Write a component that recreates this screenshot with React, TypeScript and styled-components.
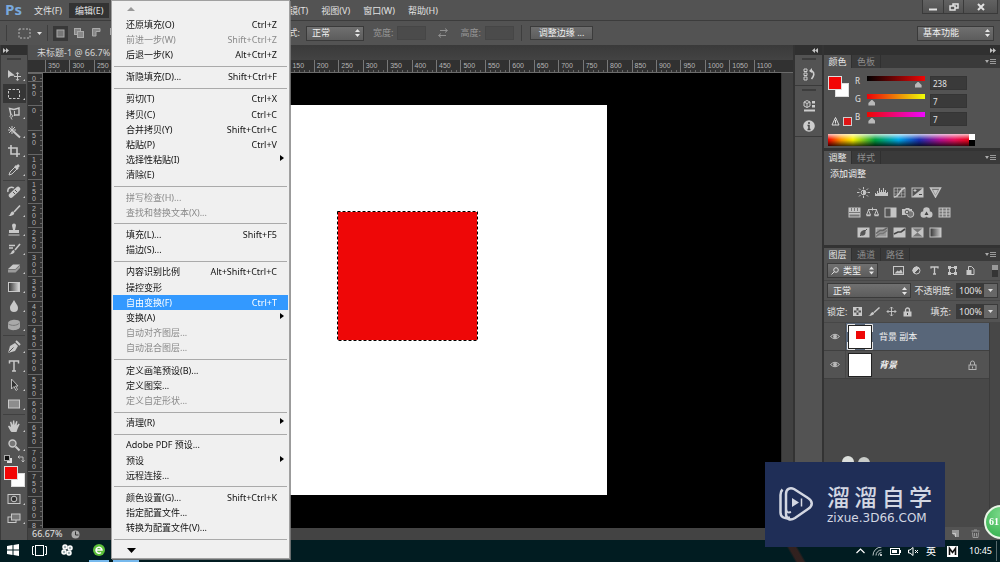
import React from 'react';
import styled, { createGlobalStyle, css } from 'styled-components';

const GlobalStyle = createGlobalStyle`
  *, *::before, *::after { box-sizing: border-box; }
  body {
    margin: 0;
    background: #000;
    color: #e2e2e2;
    font: 9px/12px "Noto Sans", "Noto Sans CJK SC", sans-serif;
    overflow: hidden;
  }
  button, input, select { font: inherit; color: inherit; margin: 0; padding: 0; border: 0; background: none; border-radius: 0; }
  ul { margin: 0; padding: 0; list-style: none; }
  svg { display: block; flex: none; }
`;

/* ---------- frame ---------- */

const Page = styled.div`
  display: flex;
  flex-direction: column;
  height: 100vh;
`;

const MenuBar = styled.header`
  display: flex;
  height: 20px;
  background: #535353;
`;

const Brand = styled.strong`
  width: 28px;
  padding-left: 5px;
  font: bold 15px/19px "Open Sans", sans-serif;
  color: #79a9dd;
`;

const MenuNav = styled.nav`
  display: flex;
  flex: 1;
  gap: 1px;
  padding: 3px 0 2px;
`;

const MenuTitle = styled.button<{ $open?: boolean }>`
  height: 15px;
  padding: 0 6px;
  white-space: nowrap;
  background: ${(p) => (p.$open ? '#333' : 'transparent')};
`;

const WindowButtons = styled.div`
  display: flex;
  height: 14px;
  margin-right: 2px;
  border: 1px solid #3a3a3a;
  border-top: 0;
`;

const WindowButton = styled.button<{ $wide?: boolean }>`
  display: grid;
  place-items: center;
  width: ${(p) => (p.$wide ? 34 : 20)}px;
  background: linear-gradient(#626262, #515151);
  & + & { border-left: 1px solid #3a3a3a; }
`;

const OptionsBar = styled.div`
  display: flex;
  align-items: center;
  height: 25px;
  padding: 0 6px;
  gap: 6px;
  background: #535353;
  border-top: 1px solid #3c3c3c;
`;

const ToolOptions = styled.div`
  display: flex;
  align-items: center;
  flex: 0 0 294px;
  justify-content: space-between;
  white-space: nowrap;
`;

const Cluster = styled.div<{ $gap?: number }>`
  display: flex;
  align-items: center;
  gap: ${(p) => p.$gap ?? 4}px;
`;

const ModeButton = styled.button<{ $on?: boolean }>`
  display: grid;
  place-items: center;
  width: 15px;
  height: 15px;
  background: ${(p) => (p.$on ? '#383838' : 'transparent')};
`;

const Field = styled.label<{ $dim?: boolean; $gap?: number }>`
  display: flex;
  align-items: center;
  gap: ${(p) => p.$gap ?? 3}px;
  color: ${(p) => (p.$dim ? '#969696' : '#e2e2e2')};
  white-space: nowrap;
`;

const NumberBox = styled.input<{ $w: number; $dim?: boolean }>`
  width: ${(p) => p.$w}px;
  height: 14px;
  padding-left: 2px;
  font-size: 8px;
  background: ${(p) => (p.$dim ? '#4b4b4b' : '#3a3a3a')};
  border: 1px solid ${(p) => (p.$dim ? '#464646' : '#353535')};
`;

const SelectShell = styled.span<{ $w?: number }>`
  display: grid;
  align-items: center;
  width: ${(p) => (p.$w ? p.$w + 'px' : 'auto')};
  flex: ${(p) => (p.$w ? 'none' : 1)};
  background: linear-gradient(#707070, #5c5c5c);
  border: 1px solid #3a3a3a;
  color: #f0f0f0;
  & > * { grid-area: 1 / 1; }
  & > svg { justify-self: end; margin-right: 3px; pointer-events: none; }
`;

const SelectBox = styled.select<{ $indent?: number }>`
  appearance: none;
  width: 100%;
  height: 13px;
  padding-left: ${(p) => p.$indent ?? 5}px;
  outline: 0;
`;

const Rule = styled.span`
  width: 1px;
  height: 16px;
  background: #3e3e3e;
`;

const PushButton = styled.button`
  height: 14px;
  padding: 0 8px;
  background: linear-gradient(#6e6e6e, #5d5d5d);
  border: 1px solid #3c3c3c;
  color: #f0f0f0;
  white-space: nowrap;
`;

const Spacer = styled.span`
  flex: 1;
`;

const Workspace = styled.main`
  display: flex;
  flex: 1;
  min-height: 0;
`;

/* ---------- tool box ---------- */

const ToolColumn = styled.aside`
  display: flex;
  flex-direction: column;
  align-items: center;
  width: 28px;
  background: #535353;
  border-right: 1px solid #3a3a3a;
  border-left: 1px solid #3a3a3a;
  overflow: hidden;
`;

const DockHead = styled.div<{ $end?: boolean }>`
  display: flex;
  align-items: center;
  align-self: stretch;
  flex: none;
  justify-content: ${(p) => (p.$end ? 'flex-end' : 'flex-start')};
  height: 10px;
  padding: 0 4px 0 2px;
  background: #303030;
`;

const Grip = styled.div`
  width: 14px;
  height: 2px;
  flex: none;
  margin: 3px 0 5px;
  background: #3d3d3d;
`;

const ToolButton = styled.button<{ $on?: boolean }>`
  position: relative;
  display: grid;
  place-items: center;
  flex: none;
  width: 23px;
  height: 19px;
  background: ${(p) => (p.$on ? '#363636' : 'transparent')};
  color: #c9c9c9;
  &::after {
    content: '';
    position: absolute;
    right: 1px;
    bottom: 3px;
    border: 1px solid;
    border-color: transparent #c9c9c9 #c9c9c9 transparent;
  }
`;

const ToolSplit = styled.hr`
  align-self: stretch;
  height: 1px;
  flex: none;
  margin: 1px 2px;
  border: 0;
  background: #404040;
`;

const MiniRow = styled.div`
  display: flex;
  justify-content: space-between;
  width: 21px;
  margin: 1px 0 3px;
`;

const Swatches = styled.div<{ $s: number }>`
  display: grid;
  flex: none;
  width: ${(p) => p.$s + 7}px;
  height: ${(p) => p.$s + 7}px;
  margin-bottom: 2px;
`;

const Swatch = styled.button<{ $s: number; $c: string; $back?: boolean }>`
  grid-area: 1 / 1;
  width: ${(p) => p.$s}px;
  height: ${(p) => p.$s}px;
  align-self: ${(p) => (p.$back ? 'end' : 'start')};
  justify-self: ${(p) => (p.$back ? 'end' : 'start')};
  background: ${(p) => p.$c};
  border: 1px solid #ddd;
`;

/* ---------- document ---------- */

const DocumentArea = styled.section`
  display: flex;
  flex-direction: column;
  flex: 1;
  min-width: 0;
  background: #3d3d3d;
`;

const TabStrip = styled.div`
  display: flex;
  height: 15px;
  flex: none;
  background: linear-gradient(#3a3a3a, #434343);
`;

const DocTab = styled.button`
  height: 15px;
  padding: 0 9px;
  background: #505050;
  color: #d6d6d6;
  font-size: 9px;
  white-space: nowrap;
`;

const CanvasRow = styled.div`
  display: flex;
  flex: 1;
  min-height: 0;
`;

const RulerTop = styled.div`
  display: flex;
  height: 13px;
  flex: none;
  padding: 0 15px 0 17px;
  background: #313131;
  border-bottom: 1px solid #6a6a6a;
  font: 7px/11px "Liberation Sans", sans-serif;
  color: #b5b5b5;
`;

const TopMark = styled.span`
  flex: 1 1 0;
  min-width: 0;
  padding-left: 2px;
  border-left: 1px solid #777;
  background: repeating-linear-gradient(90deg, transparent 0 4px, #666 4px 5px) bottom / 100% 2px no-repeat;
`;

const RulerSide = styled.div`
  display: flex;
  flex-direction: column;
  width: 15px;
  flex: none;
  background: #313131;
  border-right: 1px solid #6a6a6a;
  font: 7px/7px "Liberation Sans", sans-serif;
  color: #b5b5b5;
  overflow: hidden;
`;

const SideMark = styled.span<{ $part?: number }>`
  display: flex;
  flex-direction: column;
  flex: ${(p) => (p.$part ? `0 0 ${p.$part}px` : '1 1 0')};
  min-height: 0;
  padding: 1px 0 0 4px;
  border-top: 1px solid #666;
  background: repeating-linear-gradient(transparent 0 4px, #666 4px 5px) right / 2px 100% no-repeat;
  overflow: hidden;
`;

const Pasteboard = styled.div`
  display: grid;
  place-items: center;
  flex: 1;
  padding-bottom: 2px;
  background: #000;
`;

const Artboard = styled.div`
  position: relative;
  width: 390px;
  height: 390px;
  background: #fff;
`;

const SelectedShape = styled.svg`
  position: absolute;
  left: 120px;
  top: 106px;
`;

const ScrollTrack = styled.div`
  width: 12px;
  background: #414141;
  border-left: 1px solid #333;
`;

const StatusBar = styled.footer`
  display: flex;
  align-items: center;
  gap: 9px;
  height: 12px;
  flex: none;
  padding-left: 4px;
  background: #434343;
`;

/* ---------- docks ---------- */

const IconDock = styled.aside`
  width: 29px;
  flex: none;
  background: #535353;
  border-left: 2px solid #333;
`;

const DockGroup = styled.div`
  display: flex;
  flex-direction: column;
  align-items: center;
  border-bottom: 1px solid #3a3a3a;
`;

const DockButton = styled.button`
  display: grid;
  place-items: center;
  width: 24px;
  height: 19px;
  margin-bottom: 1px;
  color: #cdcdcd;
`;

const Panels = styled.aside`
  display: flex;
  flex-direction: column;
  width: 178px;
  flex: none;
  background: #333;
  border-left: 2px solid #333;
`;

const Panel = styled.section<{ $grow?: boolean }>`
  display: flex;
  flex-direction: column;
  flex: ${(p) => (p.$grow ? 1 : 'none')};
  margin-bottom: ${(p) => (p.$grow ? 0 : 3)}px;
  min-height: 0;
  background: #535353;
`;

const PanelTabs = styled.div`
  display: flex;
  align-items: center;
  height: 13px;
  flex: none;
  padding-right: 4px;
  background: #3a3a3a;
`;

const PanelTab = styled.button<{ $on?: boolean }>`
  width: ${(p) => (p.$on ? 28 : 29)}px;
  height: 13px;
  background: ${(p) => (p.$on ? '#535353' : 'transparent')};
  color: ${(p) => (p.$on ? '#e6e6e6' : '#8d8d8d')};
  border-right: 1px solid #303030;
`;

const ColorBody = styled.div`
  display: flex;
  height: 66px;
  padding: 8px 33px 0 4px;
`;

const ColorLeft = styled.div`
  display: flex;
  flex-direction: column;
  justify-content: space-between;
  width: 27px;
  height: 50px;
`;

const Gamut = styled.div`
  display: flex;
  align-items: center;
  gap: 3px;
  padding-left: 3px;
`;

const GamutChip = styled.button`
  width: 9px;
  height: 9px;
  background: #e01515;
  border: 1px solid #ccc;
`;

const Channels = styled.div`
  display: flex;
  flex-direction: column;
  gap: 4px;
  flex: 1;
`;

const Channel = styled.div`
  display: flex;
  gap: 5px;
  height: 14px;
`;

const ChannelName = styled.label`
  width: 7px;
  font-size: 8px;
  line-height: 10px;
`;

const Slider = styled.input<{ $from: string; $to: string }>`
  appearance: none;
  flex: 1;
  min-width: 0;
  width: 0;
  height: 12px;
  margin: 0 0 2px;
  background: linear-gradient(90deg, ${(p) => p.$from}, ${(p) => p.$to}) top / 100% 5px no-repeat;
  &::-webkit-slider-thumb {
    appearance: none;
    width: 7px;
    height: 6px;
    margin-top: 5px;
    background: #b9b9b9;
    clip-path: polygon(50% 0, 100% 60%, 100% 100%, 0 100%, 0 60%);
  }
`;

const Spectrum = styled.div`
  height: 12px;
  margin: 0 25px 2px 4px;
  background:
    linear-gradient(#fff 0 50%, #000 50%) right / 6px 100% no-repeat,
    linear-gradient(rgba(255,255,255,.75), rgba(255,255,255,0) 45%, rgba(0,0,0,0) 50%, rgba(0,0,0,.75)),
    linear-gradient(90deg, #f00000, #ff9a00 9%, #f7f000 17%, #00a040 32%, #00a8e8 48%, #1b2fb0 62%, #b01090 76%, #e8105a 86%, #f00000);
`;

const AdjustBody = styled.div`
  display: flex;
  flex-direction: column;
  height: 81px;
  padding: 4px 6px;
`;

const AdjustTitle = styled.div`
  line-height: 12px;
  color: #eee;
`;

const AdjustGrid = styled.div`
  display: flex;
  flex-direction: column;
  gap: 8px;
  width: 139px;
  padding-top: 6px;
`;

const AdjustRow = styled.div`
  display: flex;
  justify-content: center;
  gap: 4px;
`;

const AdjustButton = styled.button`
  display: grid;
  place-items: center;
  width: 14px;
  height: 12px;
  color: #c4c4c4;
`;

const LayerBar = styled.div<{ $tall?: boolean }>`
  display: flex;
  align-items: center;
  height: ${(p) => (p.$tall ? 22 : 20)}px;
  flex: none;
  padding: 0 2px 0 3px;
  gap: 4px;
  border-bottom: 1px solid #474747;
  white-space: nowrap;
`;

const IconButton = styled.button<{ $w?: number }>`
  display: grid;
  place-items: center;
  width: ${(p) => p.$w ?? 12}px;
  height: 14px;
  color: #c8c8c8;
`;

const PercentBox = styled.span`
  display: flex;
  align-items: center;
  height: 15px;
  border: 1px solid #3a3a3a;
  background: #3a3a3a;
  input { width: 27px; height: 13px; padding-left: 2px; }
  button { display: grid; place-items: center; width: 13px; height: 13px; background: #676767; }
`;

const LayerArea = styled.div`
  display: flex;
  flex: 1;
  min-height: 0;
`;

const LayerList = styled.ul`
  flex: 1;
  background: #484848;
`;

const Layer = styled.li<{ $on?: boolean }>`
  display: flex;
  align-items: center;
  height: 28px;
  padding-right: 12px;
  background: ${(p) => (p.$on ? '#586679' : '#535353')};
  border-bottom: 1px solid #404040;
  color: #f0f0f0;
  & > svg { color: #b4b4b4; }
`;

const EyeButton = styled.button`
  display: grid;
  place-items: center;
  align-self: stretch;
  width: 22px;
  margin-right: 2px;
  background: #535353;
  border-right: 1px solid #484848;
  color: #bdbdbd;
`;

const Thumb = styled.span`
  display: grid;
  place-items: center;
  width: 24px;
  height: 24px;
  margin-right: 7px;
  background: #fff;
  border: 1px solid #222;
`;

const ThumbCorners = styled.svg`
  grid-area: 1 / 1;
  margin: -2px;
`;

const ThumbShape = styled.i`
  grid-area: 1 / 1;
  width: 9px;
  height: 8px;
  margin-bottom: 3px;
  background: #ee0707;
`;

const LayerName = styled.span<{ $italic?: boolean }>`
  flex: 1;
  ${(p) => p.$italic && css`font-style: italic; font-weight: 600;`}
`;

const LayerScroll = styled.div`
  width: 11px;
  background: #474747;
  border-left: 1px solid #3c3c3c;
`;

const LayerFooter = styled.div`
  display: flex;
  align-items: center;
  justify-content: flex-end;
  gap: 8px;
  height: 13px;
  flex: none;
  padding-right: 19px;
  background: #535353;
`;

/* ---------- drop-down menu ---------- */

const DropMenu = styled.div`
  position: fixed;
  left: 111px;
  top: 0;
  display: flex;
  flex-direction: column;
  width: 179px;
  height: calc(100vh - 3px);
  background: #f0f0f0;
  border: 1px solid #a0a0a0;
  box-shadow: 1px 1px 0 rgba(130, 130, 130, 0.8);
  color: #111;
  z-index: 5;
`;

const ScrollCue = styled.button<{ $h: number }>`
  display: flex;
  align-items: center;
  height: ${(p) => p.$h}px;
  flex: none;
  padding-left: 15px;
`;

const MenuItem = styled.button<{ $on?: boolean }>`
  display: flex;
  align-items: center;
  justify-content: space-between;
  flex: 1 1 0;
  min-height: 0;
  margin: 0 1px;
  padding: 0 11px 0 13px;
  line-height: 12px;
  white-space: nowrap;
  background: ${(p) => (p.$on ? '#3399ff' : 'transparent')};
  color: ${(p) => (p.$on ? '#fff' : '#111')};
  &:disabled { color: #8a8a8a; }
  svg { margin: -4px -7px 0 0; }
`;

const MenuSplit = styled.hr`
  width: calc(100% - 4px);
  height: 1px;
  flex: none;
  margin: 3px 2px;
  border: 0;
  background: #aaa;
`;

/* ---------- taskbar and overlays ---------- */

const Taskbar = styled.footer`
  display: flex;
  align-items: stretch;
  height: 22px;
  flex: none;
  background: linear-gradient(60deg, transparent 0 40%, rgba(70, 35, 30, .7) 44% 54%, transparent 58%) 770px 0 / 50px 100% no-repeat, #011c21;
  color: #fff;
`;

const TaskButton = styled.button<{ $w: number; $run?: boolean }>`
  display: grid;
  place-items: center;
  width: ${(p) => p.$w}px;
  border-bottom: 2px solid ${(p) => (p.$run ? '#76b9ed' : 'transparent')};
`;

const TaskGap = styled.span<{ $w: number }>`
  width: ${(p) => p.$w}px;
`;

const Tray = styled.div`
  display: flex;
  align-items: center;
  gap: 7px;
  margin-left: auto;
  padding-right: 3px;
`;

const InputMode = styled.span`
  padding-right: 4px;
  font-size: 10px;
`;

const Clock = styled.time`
  padding: 0 4px;
  line-height: 20px;
  border-right: 1px solid #56696c;
`;

const Blobs = styled.svg`
  position: fixed;
  right: 128px;
  bottom: 93px;
`;

const Watermark = styled.div`
  position: fixed;
  right: 55px;
  bottom: 15px;
  display: flex;
  align-items: center;
  gap: 13px;
  width: 180px;
  height: 85px;
  padding: 0 13px 2px 14px;
  background: #1f2e57;
  color: #d3d7e2;
`;

const WatermarkText = styled.div`
  flex: 1;
`;

const WatermarkName = styled.div`
  display: flex;
  justify-content: space-between;
  font-size: 23px;
  line-height: 28px;
  font-weight: 500;
`;

const WatermarkSite = styled.div`
  font: 12px/14px "DejaVu Sans", sans-serif;
  white-space: nowrap;
`;

const FloatBall = styled.button`
  position: fixed;
  right: -18px;
  bottom: 23px;
  width: 34px;
  height: 34px;
  padding-right: 14px;
  border-radius: 50%;
  border: 2px solid #e8f5e6;
  background: radial-gradient(circle at 50% 25%, #7bd98a, #2fae4a);
  color: #fff;
  font: bold 10px/12px "Liberation Serif", serif;
`;

/* ---------- drawings ---------- */

type IconProps = { w?: number; h?: number; children: React.ReactNode };
const Icon = ({ w = 14, h = 14, children }: IconProps) => (
  <svg width={w} height={h} viewBox={`0 0 ${w} ${h}`} fill="none" stroke="currentColor" aria-hidden="true">
    {children}
  </svg>
);

const UpDown = () => (
  <Icon w={5} h={8}><path d="M0 3 2.5 0 5 3ZM0 5 2.5 8 5 5Z" fill="#e6e6e6" stroke="none" /></Icon>
);
const DownTri = () => (
  <Icon w={5} h={3}><path d="M0 0h5L2.5 3Z" fill="#e0e0e0" stroke="none" /></Icon>
);
const Chevrons = ({ right }: { right?: boolean }) => (
  <Icon w={6} h={5}>
    <path d={right ? 'M0 0 3 2.5 0 5ZM3 0 6 2.5 3 5Z' : 'M3 0 0 2.5 3 5ZM6 0 3 2.5 6 5Z'} fill="#c4c4c4" stroke="none" />
  </Icon>
);
const PanelMenu = () => (
  <Icon w={11} h={6}><path d="M0 1h4L2 4Z" fill="#aaa" stroke="none" /><path d="M5 .5h6M5 2.5h6M5 4.5h6" stroke="#999" /></Icon>
);
const SubArrow = () => (
  <Icon w={4} h={6}><path d="M0 0 4 3 0 6Z" fill="#000" stroke="none" /></Icon>
);
const LockIcon = () => (
  <Icon w={9} h={10}><path d="M2.5 5V3a2 2 0 0 1 4 0v2" /><rect x="1" y="5" width="7" height="4.5" /><path d="M4.5 6.5v2" /></Icon>
);
const SolidLock = () => (
  <Icon w={9} h={10}><path d="M2.5 5V3a2 2 0 0 1 4 0v2" strokeWidth="1.3" /><path d="M.5 4.500h8v5h-8Z" fill="currentColor" stroke="none" /><path d="M4.500 6v2" stroke="#444" /></Icon>
);
const EyeIcon = () => (
  <Icon w={10} h={7}><path d="M.5 3.500Q5-1 9.500 3.500 5 8 .5 3.500Z" /><circle cx="5" cy="3.500" r="1.500" fill="currentColor" /></Icon>
);

const toolGroups: { name: string; art: React.ReactNode }[][] = [
  [
    { name: '移动', art: <><path d="M1 2v8l2.500-2 4.500-.5Z" fill="currentColor" stroke="none" /><path d="M10.500 5v7M7 8.500h7" /><path d="m9 6 1.500-1.800L12 6M9 11l1.500 1.800L12 11" strokeWidth=".8" /></> },
    { name: '矩形选框', art: <rect x="1.500" y="2.500" width="11" height="9" strokeDasharray="2.500 1.500" /> },
    { name: '套索', art: <><path d="M4 9 2.500 2.500 7 3.500 12 2v7H7.500" strokeWidth="1.400" /><path d="M7.500 5v5M4 9c-2 1-1 3 1 2s0-3-1-2Zm0 3 1 1.500" /></> },
    { name: '魔棒', art: <><path d="m6 6 7 6.500" strokeWidth="2" /><path d="M5 1v8M1 5h8M2 2l6 6M8 2 2 8" /></> },
    { name: '裁剪', art: <path d="M4 1v9h9M1 4h9v9" strokeWidth="1.600" /> },
    { name: '吸管', art: <><path d="m2 12 1-3 5-5 2 2-5 5Z" /><path d="m8 3 3 3M9 5l3-3" strokeWidth="2.500" /></> },
  ],
  [
    { name: '修复画笔', art: <><path d="m4 10.500 7-6.500" strokeWidth="4.500" strokeLinecap="round" /><path d="m6 7 2 2M8 5l2 2" stroke="#535353" /><path d="M1 7c-1-4 3-6 6-4" strokeWidth="1.500" /></> },
    { name: '画笔', art: <><path d="M13 1.500 7 8" strokeWidth="1.600" /><path d="M1 12c3 0 2-5 5-4.500 3 2 0 5-5 4.500Z" fill="currentColor" stroke="none" /></> },
    { name: '仿制图章', art: <><path d="M5 2.500a2 2 0 0 1 4 0L8 7h4v3H2V7h4Z" fill="currentColor" stroke="none" /><path d="M1.500 12h11" /></> },
    { name: '历史记录画笔', art: <><path d="M13 2 8 8" strokeWidth="1.600" /><path d="M2 12c3 0 2-4 5-4 2 2-1 5-5 4Z" fill="currentColor" stroke="none" /><path d="M2 3.500h6M2 6h4" strokeWidth="1.500" /></> },
    { name: '橡皮擦', art: <><path d="m1 8 5-4.500h7L8.500 8Z" fill="currentColor" stroke="none" /><path d="M1 8.500h7.500v3H1ZM8.500 8.500 13 4v3l-4.500 4.500Z" fill="#9a9a9a" stroke="none" /></> },
    { name: '渐变', art: <><defs><linearGradient id="gt"><stop stopColor="#333" /><stop offset="1" stopColor="#ddd" /></linearGradient></defs><rect x="1.500" y="2.500" width="11" height="9" fill="url(#gt)" /></> },
    { name: '模糊', art: <path d="M7 1c2 4 4 5 4 8a4 4 0 0 1-8 0c0-3 2-4 4-8Z" fill="currentColor" stroke="none" /> },
    { name: '海绵', art: <><path d="M1 5c1-4 11-4 12-1v5c-1 4-11 4-12 1Z" fill="#a9a9a9" stroke="none" /><path d="M1.500 6c3 2 8 2 11-1" stroke="#777" /></> },
  ],
  [
    { name: '钢笔', art: <><path d="M1 13 3 6l5-3 3 3-3 5Z" fill="currentColor" stroke="none" /><path d="m9 1 4 4" strokeWidth="2" /><path d="m1.500 12.500 5-5" stroke="#535353" /></> },
    { name: '文字', art: <path d="M2.500 4.500V2h9v2.500M7 2v10M5 12h4" strokeWidth="1.500" /> },
    { name: '路径选择', art: <path d="M4.500 1v10L7 8.500l2 4 1.500-1-2-3.500H11Z" fill="#333" strokeWidth=".9" /> },
    { name: '矩形', art: <rect x="1.500" y="3" width="11" height="8" fill="#8d8d8d" /> },
  ],
  [
    { name: '抓手', art: <path d="M3.500 12 1 7.500l1-1L4 8 3 3l1.300-.4L5.500 6 6 1.500h1.300L7.700 6l1.600-4 1.200.5-.8 4 2-2 1 .8L10.500 10l-1 3h-5Z" fill="currentColor" stroke="none" /> },
    { name: '缩放', art: <><circle cx="5.500" cy="5.500" r="3.500" strokeWidth="1.400" fill="#777" /><path d="m8.500 8.500 4 4" strokeWidth="2" /></> },
  ],
];

const adjustRows: { name: string; art: React.ReactNode }[][] = [
  [
    { name: '亮度/对比度', art: <><circle cx="6.500" cy="5.500" r="2.300" /><path d="M6.500 3.200a2.300 2.300 0 0 1 0 4.600Z" fill="currentColor" /><path d="M6.500 0v2M6.500 9v2M0 5.500h2.500M10.500 5.500H13M2 1.500 3.500 3M11 1.500 9.500 3M2 9.500 3.500 8M11 9.500 9.500 8" /></> },
    { name: '色阶', art: <path d="M0 9V6h1v1h1V4h1v2h1V1h1v4h1V3h1v2h1V1h1v4h1V3h1v3h1V5h1v4Z" fill="currentColor" stroke="none" /> },
    { name: '曲线', art: <><rect x="1" y="1" width="11" height="9" strokeWidth=".8" /><path d="M1 4h11M1 7h11M4.500 1v9M8.500 1v9" strokeWidth=".5" /><path d="M1 10c6 0 5-8 11-9" strokeWidth="1.500" /></> },
    { name: '曝光度', art: <><rect x="1" y="1" width="11" height="9" /><path d="M12 1v9H1Z" fill="currentColor" stroke="none" /><path d="M2.500 3.500h3M4 2v3" /><path d="M8 7.500h3" stroke="#444" /></> },
    { name: '自然饱和度', art: <><path d="M1.500 1h10l-5 9Z" fill="#777" strokeWidth="1.500" /><path d="M4 3h5L6.500 8Z" fill="currentColor" stroke="none" /></> },
  ],
  [
    { name: '色相/饱和度', art: <><path d="M.5.500h12v10H.5Z" fill="currentColor" stroke="none" /><path d="M3.500 1v3M6.500 1v3M9.500 1v3M1 5.500h11" stroke="#777" /><path d="M1.500 8.500h10" stroke="#777" strokeWidth="2" /></> },
    { name: '色彩平衡', art: <><path d="M2 2.500h9M6.500.500v3M2.500 3 .5 8h4Zm8 0-2 5h4Z" /><path d="M.5 8.500h4M8.500 8.500h4" strokeWidth="1.500" /></> },
    { name: '黑白', art: <><rect x="1" y="1" width="11" height="9" fill="#555" /><path d="M6.500 1H12v9H6.500Z" fill="currentColor" stroke="none" /></> },
    { name: '照片滤镜', art: <><path d="M0 2h3l1-1h3l1 1h2v6H0Z" fill="currentColor" stroke="none" /><circle cx="8.500" cy="7" r="3.300" fill="#777" /><circle cx="5" cy="5" r="1.800" stroke="#555" /></> },
    { name: '通道混合器', art: <><circle cx="6.500" cy="3.500" r="3.300" fill="currentColor" stroke="none" /><circle cx="3.800" cy="7.500" r="3.300" fill="currentColor" stroke="none" /><circle cx="9.200" cy="7.500" r="3.300" fill="currentColor" stroke="none" /><path d="M6.500 4.500 8.500 8h-4Z" fill="#444" stroke="none" /></> },
    { name: '颜色查找', art: <><rect x="1" y="1" width="11" height="9" fill="#777" /><path d="M1 4h11M1 7h11M4.700 1v9M8.300 1v9" /></> },
  ],
  [
    { name: '反相', art: <><rect x="1" y="1" width="11" height="9" fill="currentColor" /><path d="M3.500 8.500c-1-3 1-5.500 5-5.500v3c0 2-2 3-5 2.500Z" fill="#555" stroke="none" /><path d="m3 9 7-7" stroke="#555" /></> },
    { name: '色调分离', art: <><rect x="1" y="1" width="11" height="9" fill="#999" /><path d="m1 6.500 4-3h3L12 1" stroke="#666" strokeWidth="1.500" /><path d="m1 9.500 4-3 3 0 4-3" stroke="#777" strokeWidth="1.500" /></> },
    { name: '阈值', art: <><rect x="1" y="1" width="11" height="9" fill="currentColor" /><path d="m1 7 4-2 3 0 4-3" stroke="#444" strokeWidth="1.600" /></> },
    { name: '可选颜色', art: <><rect x="1" y="1" width="11" height="9" fill="#777" /><path d="M1 1l5.500 4.500L1 10ZM12 1 6.500 5.500 12 10Z" fill="currentColor" stroke="none" /></> },
    { name: '渐变映射', art: <><defs><linearGradient id="gm"><stop stopColor="#333" /><stop offset="1" stopColor="#ccc" /></linearGradient></defs><rect x="1" y="1" width="11" height="9" fill="url(#gm)" /></> },
  ],
];

/* ---------- data ---------- */

const menuTitles = ['文件(F)', '编辑(E)', '图像(I)', '图层(L)', '文字(Y)', '选择(S)', '滤镜(T)', '视图(V)', '窗口(W)', '帮助(H)'];

type Entry = { label: string; keys?: string; off?: boolean; on?: boolean; sub?: boolean };
const editMenu: Entry[][] = [
  [{ label: '还原填充(O)', keys: 'Ctrl+Z' }, { label: '前进一步(W)', keys: 'Shift+Ctrl+Z', off: true }, { label: '后退一步(K)', keys: 'Alt+Ctrl+Z' }],
  [{ label: '渐隐填充(D)...', keys: 'Shift+Ctrl+F' }],
  [
    { label: '剪切(T)', keys: 'Ctrl+X' }, { label: '拷贝(C)', keys: 'Ctrl+C' }, { label: '合并拷贝(Y)', keys: 'Shift+Ctrl+C' },
    { label: '粘贴(P)', keys: 'Ctrl+V' }, { label: '选择性粘贴(I)', sub: true }, { label: '清除(E)' },
  ],
  [{ label: '拼写检查(H)...', off: true }, { label: '查找和替换文本(X)...', off: true }],
  [{ label: '填充(L)...', keys: 'Shift+F5' }, { label: '描边(S)...' }],
  [
    { label: '内容识别比例', keys: 'Alt+Shift+Ctrl+C' }, { label: '操控变形' }, { label: '自由变换(F)', keys: 'Ctrl+T', on: true },
    { label: '变换(A)', sub: true }, { label: '自动对齐图层...', off: true }, { label: '自动混合图层...', off: true },
  ],
  [{ label: '定义画笔预设(B)...' }, { label: '定义图案...' }, { label: '定义自定形状...', off: true }],
  [{ label: '清理(R)', sub: true }],
  [{ label: 'Adobe PDF 预设...' }, { label: '预设', sub: true }, { label: '远程连接...' }],
  [{ label: '颜色设置(G)...', keys: 'Shift+Ctrl+K' }, { label: '指定配置文件...' }, { label: '转换为配置文件(V)...' }],
];

const topMarks = Array.from({ length: 30 }, (_, i) => Math.abs(i * 50 - 350));
const sideMarks = Array.from({ length: 18 }, (_, i) => Math.abs(i * 50 - 50));

const channels = [
  { name: 'R', value: 238, from: '#000', to: '#f00707' },
  { name: 'G', value: 7, from: '#ee0007', to: '#eeff07' },
  { name: 'B', value: 7, from: '#ee0700', to: '#ee07ff' },
];

/* ---------- sections ---------- */

const Percent = ({ label, gap }: { label: string; gap: number }) => (
  <Field $gap={gap}>
    {label}
    <PercentBox>
      <input defaultValue="100%" aria-label={label} />
      <button aria-label="展开"><DownTri /></button>
    </PercentBox>
  </Field>
);

function Toolbox() {
  return (
    <ToolColumn>
      <DockHead><Chevrons right /></DockHead>
      <Grip />
      {toolGroups.map((group, g) => (
        <React.Fragment key={g}>
          {g > 0 && <ToolSplit />}
          {group.map((t) => (
            <ToolButton key={t.name} aria-label={t.name} $on={t.name === '矩形选框'}>
              <Icon>{t.art}</Icon>
            </ToolButton>
          ))}
        </React.Fragment>
      ))}
      <MiniRow>
        <Icon w={8} h={8}><rect x="3" y="3" width="5" height="5" fill="#ddd" stroke="none" /><rect x=".5" y=".5" width="5" height="5" fill="#111" stroke="#aaa" /></Icon>
        <Icon w={8} h={8}><path d="M1 2h5v5M2.500.500 1 2l1.500 1.500M4.500 5.500 6 7l1.500-1.500" stroke="#bbb" /></Icon>
      </MiniRow>
      <Swatches $s={14}>
        <Swatch $s={14} $c="#fff" $back aria-label="背景色" />
        <Swatch $s={14} $c="#f20505" aria-label="前景色" />
      </Swatches>
      <ToolButton aria-label="快速蒙版"><Icon><rect x="1" y="2.500" width="12" height="9" /><circle cx="7" cy="7" r="2.800" fill="#333" /></Icon></ToolButton>
      <ToolButton aria-label="屏幕模式"><Icon><rect x="1" y="6" width="8" height="5.500" /><rect x="4.500" y="3" width="8.500" height="6" fill="#777" /></Icon></ToolButton>
    </ToolColumn>
  );
}

function EditMenu() {
  return (
    <DropMenu role="menu">
      <ScrollCue $h={16} aria-label="向上滚动"><Icon w={8} h={4}><path d="M0 4 4 0 8 4Z" fill="#999" stroke="none" /></Icon></ScrollCue>
      {editMenu.map((group, g) => (
        <React.Fragment key={g}>
          {group.map((e) => (
            <MenuItem key={e.label} role="menuitem" disabled={e.off} $on={e.on}>
              <span>{e.label}</span>
              {e.keys && <span>{e.keys}</span>}
              {e.sub && <SubArrow />}
            </MenuItem>
          ))}
          <MenuSplit />
        </React.Fragment>
      ))}
      <ScrollCue $h={15} aria-label="向下滚动"><Icon w={9} h={5}><path d="M0 0h9L4.500 5Z" fill="#000" stroke="none" /></Icon></ScrollCue>
    </DropMenu>
  );
}

function ColorPanel() {
  return (
    <Panel>
      <PanelTabs><PanelTab $on>颜色</PanelTab><PanelTab>色板</PanelTab><Spacer /><PanelMenu /></PanelTabs>
      <ColorBody>
        <ColorLeft>
          <Swatches $s={14}>
            <Swatch $s={14} $c="#fff" $back aria-label="背景色" />
            <Swatch $s={14} $c="#f20505" aria-label="前景色" />
          </Swatches>
          <Gamut>
            <Icon w={9} h={9}><path d="M4.500.500 8 8H1Z" stroke="#ddd" /><path d="M4.500 3v3M4.500 6.500v1" stroke="#ddd" /></Icon>
            <GamutChip aria-label="替换色" />
          </Gamut>
        </ColorLeft>
        <Channels>
          {channels.map((c) => (
            <Channel key={c.name}>
              <ChannelName htmlFor={`ch-${c.name}`}>{c.name}</ChannelName>
              <Slider type="range" id={`ch-${c.name}`} min={0} max={255} defaultValue={c.value} $from={c.from} $to={c.to} />
              <NumberBox $w={37} defaultValue={c.value} aria-label={`${c.name} 值`} />
            </Channel>
          ))}
        </Channels>
      </ColorBody>
      <Spectrum />
    </Panel>
  );
}

function AdjustPanel() {
  return (
    <Panel>
      <PanelTabs><PanelTab $on>调整</PanelTab><PanelTab>样式</PanelTab><Spacer /><PanelMenu /></PanelTabs>
      <AdjustBody>
        <AdjustTitle>添加调整</AdjustTitle>
        <AdjustGrid>
          {adjustRows.map((row, i) => (
            <AdjustRow key={i}>
              {row.map((a) => <AdjustButton key={a.name} aria-label={a.name}><Icon w={13} h={11}>{a.art}</Icon></AdjustButton>)}
            </AdjustRow>
          ))}
        </AdjustGrid>
      </AdjustBody>
    </Panel>
  );
}

function LayersPanel() {
  return (
    <Panel $grow>
      <PanelTabs><PanelTab $on>图层</PanelTab><PanelTab>通道</PanelTab><PanelTab>路径</PanelTab><Spacer /><PanelMenu /></PanelTabs>
      <LayerBar>
        <SelectShell $w={51}>
          <SelectBox aria-label="滤镜类型" $indent={15}><option>类型</option></SelectBox>
          <Icon w={43} h={9}><circle cx="5" cy="4" r="2.300" stroke="#ddd" /><path d="M3.500 5.500.500 8.500" stroke="#ddd" /><path d="M38 3.500 40.500.500 43 3.500ZM38 5.500 40.500 8.500 43 5.500Z" fill="#e6e6e6" stroke="none" /></Icon>
        </SelectShell>
        <Spacer />
        <Cluster $gap={6}>
          <IconButton aria-label="像素图层"><Icon w={11} h={9}><rect x=".5" y=".5" width="10" height="8" /><path d="m1.500 7.500 3-3 1.500 1 2-2 2 4Z" fill="currentColor" stroke="none" /></Icon></IconButton>
          <IconButton aria-label="调整图层"><Icon w={9} h={9}><circle cx="4.500" cy="4.500" r="3.500" /><path d="M7 2 2 7a3.500 3.500 0 0 1 5-5Z" fill="currentColor" /></Icon></IconButton>
          <IconButton aria-label="文字图层"><Icon w={9} h={9}><path d="M1 2.500V1h7v1.500M4.500 1v7M3 8h3" strokeWidth="1.300" /></Icon></IconButton>
          <IconButton aria-label="形状图层"><Icon w={9} h={9}><rect x="1.500" y="1.500" width="6" height="6" /><path d="M0 0h3v3H0ZM6 0h3v3H6ZM0 6h3v3H0ZM6 6h3v3H6Z" fill="currentColor" stroke="none" /></Icon></IconButton>
          <IconButton aria-label="智能对象"><Icon w={9} h={9}><path d="M2.500 4V.500h3L8 3v5.500H5" /><rect x="1" y="4.500" width="4" height="4" fill="currentColor" /></Icon></IconButton>
        </Cluster>
        <Cluster $gap={11}>
          <span />
          <IconButton $w={7} aria-label="过滤开关"><Icon w={6} h={12}><rect width="6" height="12" fill="#353535" stroke="none" /><rect width="6" height="5" fill="#999" stroke="none" /></Icon></IconButton>
        </Cluster>
      </LayerBar>
      <LayerBar>
        <SelectShell>
          <SelectBox aria-label="混合模式"><option>正常</option></SelectBox>
          <UpDown />
        </SelectShell>
        <Percent label="不透明度:" gap={3} />
      </LayerBar>
      <LayerBar $tall>
        <span>锁定:</span>
        <Cluster $gap={4}>
          <IconButton aria-label="锁定透明像素"><Icon w={9} h={9}><rect x=".5" y=".5" width="8" height="8" /><path d="M1 1h2.500v2.500H1ZM5.500 1H8v2.500H5.500ZM3.500 3.500h2v2h-2ZM1 5.500h2.500V8H1ZM5.500 5.500H8V8H5.500Z" fill="currentColor" stroke="none" /></Icon></IconButton>
          <IconButton $w={14} aria-label="锁定图像像素"><Icon w={12} h={9}><path d="M11.500.500 6 5.500" strokeWidth="1.500" /><path d="M0 9c3 0 2-4 5-4 3 2-1 4-5 4Z" fill="currentColor" stroke="none" /></Icon></IconButton>
          <IconButton aria-label="锁定位置"><Icon w={11} h={11}><path d="M5.500 1v9M1 5.500h9M4 2.500 5.500 1 7 2.500M4 8.500 5.500 10 7 8.500M2.500 4 1 5.500 2.500 7M8.500 4 10 5.500 8.500 7" strokeWidth=".9" /></Icon></IconButton>
          <IconButton aria-label="锁定全部"><SolidLock /></IconButton>
        </Cluster>
        <Spacer />
        <Percent label="填充:" gap={5} />
      </LayerBar>
      <LayerArea>
        <LayerList>
          <Layer $on>
            <EyeButton aria-label="可见性"><EyeIcon /></EyeButton>
            <Thumb>
              <ThumbCorners width="26" height="26" fill="none" stroke="#e6e6e6"><path d="M.5 8V.500H8M18 .5h7.500V8M25.500 18v7.500H18M8 25.500H.500V18" /></ThumbCorners>
              <ThumbShape />
            </Thumb>
            <LayerName>背景 副本</LayerName>
          </Layer>
          <Layer>
            <EyeButton aria-label="可见性"><EyeIcon /></EyeButton>
            <Thumb />
            <LayerName $italic>背景</LayerName>
            <LockIcon />
          </Layer>
        </LayerList>
        <LayerScroll />
      </LayerArea>
      <LayerFooter>
        <IconButton aria-label="新建图层"><Icon w={9} h={9}><path d="M1 1h7v7H5L1 4.500Z" fill="#999" stroke="none" /><path d="M1.500 4.500h3V8" /></Icon></IconButton>
        <IconButton aria-label="删除图层"><Icon w={9} h={9}><path d="M.5 2h8M3 1h3M1.500 3.500 2 8.500h5l.5-5M3.500 4v3.500M5.500 4v3.500" stroke="#999" /></Icon></IconButton>
      </LayerFooter>
    </Panel>
  );
}

export default function App() {
  return (
    <Page>
      <GlobalStyle />
      <MenuBar>
        <Brand>Ps</Brand>
        <MenuNav>
          {menuTitles.map((t) => <MenuTitle key={t} $open={t === '编辑(E)'}>{t}</MenuTitle>)}
        </MenuNav>
        <WindowButtons>
          <WindowButton aria-label="最小化"><Icon w={8} h={8}><path d="M0 6.500h8" strokeWidth="2" /></Icon></WindowButton>
          <WindowButton aria-label="还原"><Icon w={10} h={8}><rect x="4" y="1" width="5" height="4" strokeWidth="1.500" /><rect x="1" y="3" width="5" height="4" strokeWidth="1.500" fill="#555" /></Icon></WindowButton>
          <WindowButton $wide aria-label="关闭"><Icon w={8} h={8}><path d="m1 1 6 6M7 1 1 7" strokeWidth="2" /></Icon></WindowButton>
        </WindowButtons>
      </MenuBar>

      <OptionsBar>
        <ToolOptions>
          <Cluster $gap={5}>
            <Rule />
            <Cluster $gap={6}>
              <span />
              <Icon w={13} h={11}><rect x="1" y="1" width="11" height="9" strokeDasharray="2 1.500" stroke="#bbb" /></Icon>
              <DownTri />
            </Cluster>
            <Rule />
            <Cluster $gap={3}>
              <ModeButton $on aria-label="新选区"><Icon w={9} h={9}><rect x="1" y="1" width="7" height="7" fill="#777" stroke="#aaa" /></Icon></ModeButton>
              <ModeButton aria-label="添加到选区"><Icon w={10} h={10}><rect x=".5" y=".5" width="6" height="6" fill="#888" stroke="#aaa" /><rect x="3.500" y="3.500" width="6" height="6" fill="#888" stroke="#aaa" /></Icon></ModeButton>
              <ModeButton aria-label="从选区减去"><Icon w={10} h={10}><path d="M.5 8V.500H8v3H4V8Z" fill="#888" stroke="#aaa" /></Icon></ModeButton>
              <ModeButton aria-label="与选区交叉"><Icon w={10} h={10}><rect x=".5" y=".5" width="6" height="6" stroke="#aaa" /><rect x="3.500" y="3.500" width="6" height="6" stroke="#aaa" /></Icon></ModeButton>
            </Cluster>
          </Cluster>
          <label htmlFor="style">样式:</label>
        </ToolOptions>
        <Cluster $gap={7}>
          <Cluster $gap={9}>
            <SelectShell $w={58}>
              <SelectBox id="style"><option>正常</option></SelectBox>
              <UpDown />
            </SelectShell>
            <Field $dim $gap={4}>宽度: <NumberBox $w={29} $dim disabled /></Field>
            <Icon w={16} h={10}><path d="M5 2.500h7M10 .500l2.500 2L10 4.500M11 7.500H4M6 5.500 3.500 7.500 6 9.500" stroke="#909090" /></Icon>
            <Field $dim $gap={4}>高度: <NumberBox $w={29} $dim disabled /></Field>
          </Cluster>
          <Cluster $gap={8}><Rule /><PushButton>调整边缘 ...</PushButton></Cluster>
        </Cluster>
        <Spacer />
        <SelectShell $w={77}>
          <SelectBox aria-label="工作区"><option>基本功能</option></SelectBox>
          <UpDown />
        </SelectShell>
      </OptionsBar>

      <Workspace>
        <Toolbox />
        <DocumentArea>
          <TabStrip><DocTab>未标题-1 @ 66.7%</DocTab></TabStrip>
          <RulerTop>{topMarks.map((m, i) => <TopMark key={i}>{m}</TopMark>)}</RulerTop>
          <CanvasRow>
            <RulerSide>
              <SideMark $part={8}><span>0</span></SideMark>
              {sideMarks.map((m, i) => (
                <SideMark key={i}>{String(m).split('').map((d, k) => <span key={k}>{d}</span>)}</SideMark>
              ))}
              <SideMark $part={8}><span>8</span></SideMark>
            </RulerSide>
            <Pasteboard>
              <Artboard>
                <SelectedShape width="141" height="130">
                  <rect width="141" height="130" fill="#ee0707" />
                  <rect x=".5" y=".5" width="140" height="129" fill="none" stroke="#fff" />
                  <rect x=".5" y=".5" width="140" height="129" fill="none" stroke="#000" strokeDasharray="3 2" />
                </SelectedShape>
              </Artboard>
            </Pasteboard>
            <ScrollTrack />
          </CanvasRow>
          <StatusBar>
            <span>66.67%</span>
            <Icon w={9} h={9}><circle cx="4.500" cy="4.500" r="4" fill="#aaa" stroke="none" /><path d="M4.500 1.500v3.500h3" stroke="#333" /></Icon>
          </StatusBar>
        </DocumentArea>

        <IconDock>
          <DockHead $end><Chevrons /></DockHead>
          <DockGroup>
            <Grip />
            <DockButton aria-label="历史记录"><Icon w={12} h={13}><path d="M1 1h3v2.500H1ZM1 5h3v2.500H1ZM1 9h3v3H1Z" /><path d="M7 3h2c3 2 2 5-.5 8" strokeWidth="1.600" /><path d="M9 0v5L6 3Z" fill="currentColor" stroke="none" /></Icon></DockButton>
          </DockGroup>
          <DockGroup>
            <Grip />
            <DockButton aria-label="属性"><Icon w={12} h={13}><path d="m1 3 3-1.500L7 3v4L4 8.500 1 7Zm0 0 3 1.500L7 3M4 4.500v4" /><path d="M9 2h3v2.500H9ZM9 6h3v2.500H9ZM1 10.500h11v2H1Z" fill="currentColor" stroke="none" /></Icon></DockButton>
            <DockButton aria-label="信息"><Icon w={12} h={12}><circle cx="6" cy="6" r="5.800" fill="currentColor" stroke="none" /><path d="M6 2v2M4.500 5.500H6V9M4.500 9.500h3" stroke="#444" strokeWidth="1.500" /></Icon></DockButton>
          </DockGroup>
        </IconDock>
        <Panels>
          <DockHead $end><Chevrons right /></DockHead>
          <ColorPanel />
          <AdjustPanel />
          <LayersPanel />
        </Panels>
      </Workspace>

      <Taskbar>
        <TaskButton $w={26} aria-label="开始"><Icon w={12} h={12}><path d="M0 2 5.500 1v4.500H0ZM6.500 1 12 0v5.500H6.500ZM0 6.500h5.500V11L0 10ZM6.500 6.500H12V12l-5.500-1Z" fill="#fff" stroke="none" /></Icon></TaskButton>
        <TaskButton $w={27} aria-label="任务视图"><Icon w={15} h={11}><rect x="3.500" y=".5" width="8" height="10" /><path d="M2 1.500H.500v8H2M13 1.500h1.500v8H13" /></Icon></TaskButton>
        <TaskButton $w={28} aria-label="风扇"><Icon w={12} h={12}><g stroke="#fff" strokeWidth="1.500" fill="#9fb0b3"><circle cx="4" cy="3" r="2" /><circle cx="9" cy="4" r="2" /><circle cx="3" cy="8" r="2" /><circle cx="8" cy="9" r="2" /></g></Icon></TaskButton>
        <TaskGap $w={8} />
        <TaskButton $w={20} $run aria-label="浏览器"><Icon w={12} h={12}><circle cx="6" cy="6" r="6" fill="#5cbf3a" stroke="none" /><path d="M3 6h6a3 3 0 1 0-1 2.500" stroke="#fff" strokeWidth="1.500" /></Icon></TaskButton>
        <TaskGap $w={4} />
        <TaskButton $w={26} $run aria-label="图像编辑" />
        <Tray>
          <Icon w={9} h={6}><path d="M.5 5 4.500 1l4 4" strokeWidth="1.200" /></Icon>
          <Icon w={11} h={10}><path d="M1 9.500A8.500 8.500 0 0 1 9.500 1M4 9.500A5.500 5.500 0 0 1 9.500 4M6.500 9.500a3 3 0 0 1 3-3" stroke="#bcc6c8" /><circle cx="9" cy="9" r="1" fill="#fff" stroke="none" /></Icon>
          <Icon w={11} h={7}><rect x=".5" y=".5" width="9" height="6" /><path d="M2 2h5v3H2Z" fill="#fff" stroke="none" /><path d="M10.500 2v3" /></Icon>
          <Icon w={11} h={9}><path d="M.5 3v3H2l3 2.500v-8L2 3ZM7 3l3 3M10 3 7 6" /></Icon>
          <InputMode>英</InputMode>
          <Icon w={11} h={11}><rect width="11" height="11" fill="#fff" stroke="none" /><path d="M2.500 9V2.500l3 4 3-4V9" stroke="#111" strokeWidth="1.600" /></Icon>
          <Clock>10:45</Clock>
        </Tray>
      </Taskbar>

      <EditMenu />
      <Blobs width="32" height="14"><circle cx="8" cy="7" r="6" fill="#dcdfdc" /><circle cx="24" cy="8" r="6" fill="#c8cbc8" /></Blobs>
      <Watermark>
        <Icon w={35} h={35}>
          <path d="M11 31.500c-6 2-9.500-1-9.500-5V9c0-3 .5-4 2-5.500" strokeWidth="2.500" />
          <path d="M7 8c0-5 4-7 8-5l14 9c5 3 5 8 0 11L16 32c-5 3-9 1-9-4Z" strokeWidth="2.500" />
          <path d="M7 8v15c0 3 2 4 5 3" strokeWidth="2" />
          <path d="M13 12v9l7-4.500Z" fill="currentColor" stroke="none" /><path d="M22.500 12.500v8" strokeWidth="1.500" />
        </Icon>
        <WatermarkText>
          <WatermarkName><span>溜</span><span>溜</span><span>自</span><span>学</span></WatermarkName>
          <WatermarkSite>zixue.3D66.COM</WatermarkSite>
        </WatermarkText>
      </Watermark>
      <FloatBall aria-label="加速球">61</FloatBall>
    </Page>
  );
}
